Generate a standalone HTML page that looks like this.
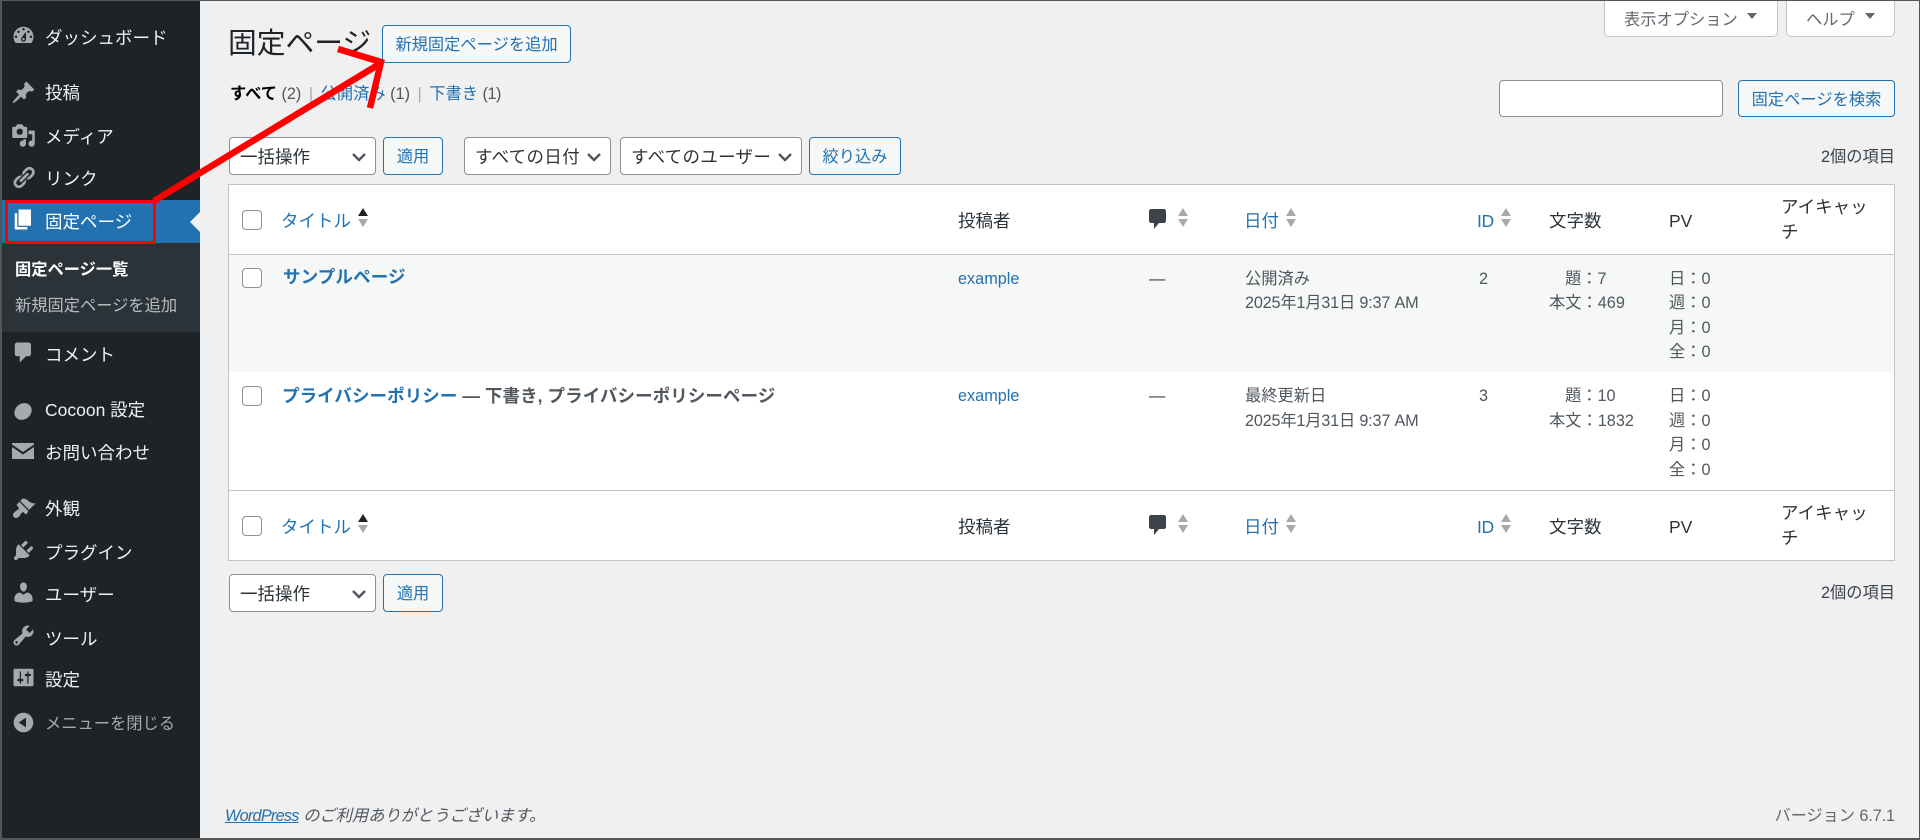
<!DOCTYPE html>
<html lang="ja"><head><meta charset="utf-8"><title>固定ページ</title>
<style>
*{box-sizing:border-box}
html,body{margin:0;padding:0;width:1920px;height:840px;overflow:hidden;background:#f0f0f1}
body{position:relative;font-family:"Liberation Sans","Noto Sans CJK JP",sans-serif;font-size:16.25px;color:#3c434a}
.a{position:absolute}
.t{position:absolute;line-height:24px;white-space:nowrap}
.m{color:#f0f0f1;font-size:17.5px;left:45px}
.ic{position:absolute;left:10.5px;width:25px;height:25px;fill:#a7aaad}
a{color:#2271b1;text-decoration:none}
.btn{position:absolute;border:1px solid #2271b1;border-radius:4px;background:#f6f7f7;color:#2271b1;text-align:center;font-size:16.25px;line-height:38px;white-space:nowrap}
.sel{position:absolute;border:1px solid #8c8f94;border-radius:4px;background:#fff;color:#2c3338;font-size:17.5px;line-height:39px;padding-left:10px;white-space:nowrap}
.sel svg{position:absolute;right:8px;top:14px;width:16px;height:12px}
.cb{position:absolute;left:242px;width:20px;height:20px;border:1px solid #8c8f94;border-radius:4px;background:#fff}
.h{color:#2c3338;font-size:17.5px}
.l{color:#2271b1;font-size:17.5px}
.tab{position:absolute;top:-2px;height:39px;background:#fff;border:1px solid #c3c4c7;border-radius:0 0 5px 5px;color:#646970;font-size:16.25px;line-height:42px;padding-left:19px}
.tab i{position:absolute;top:14px;width:0;height:0;border-left:5px solid transparent;border-right:5px solid transparent;border-top:6px solid #646970}
</style></head><body>

<!-- sidebar -->
<div class="a" style="left:0;top:0;width:200px;height:840px;background:#1d2327"></div>
<div class="a" style="left:0;top:200px;width:200px;height:43px;background:#2271b1"></div>
<div class="a" style="left:0;top:243px;width:200px;height:89px;background:#2c3338"></div>
<div class="a" style="left:190px;top:212px;width:0;height:0;border-top:10px solid transparent;border-bottom:10px solid transparent;border-right:10px solid #f0f0f1"></div>

<svg class="ic" style="top:22.5px" viewBox="0 0 20 20"><path fill-rule="evenodd" d="M3.76 16h12.48c1.1-1.37 1.76-3.11 1.76-5 0-4.42-3.58-8-8-8s-8 3.58-8 8c0 1.89.66 3.63 1.76 5zM10 4c.55 0 1 .45 1 1s-.45 1-1 1-1-.45-1-1 .45-1 1-1zM6 6c.55 0 1 .45 1 1s-.45 1-1 1-1-.45-1-1 .45-1 1-1zm8 0c.55 0 1 .45 1 1s-.45 1-1 1-1-.45-1-1 .45-1 1-1zm-5.37 5.55L12 7v6c0 1.1-.9 2-2 2s-2-.9-2-2c0-.57.24-1.08.63-1.45zM4 10c.55 0 1 .45 1 1s-.45 1-1 1-1-.45-1-1 .45-1 1-1zm12 0c.55 0 1 .45 1 1s-.45 1-1 1-1-.45-1-1 .45-1 1-1zm-5 3c0-.55-.45-1-1-1s-1 .45-1 1 .45 1 1 1 1-.45 1-1z"/></svg>
<div class="t m" style="top:26px">ダッシュボード</div>

<svg class="ic" style="top:79.5px" viewBox="0 0 20 20"><path d="M10.44 3.02l1.82-1.82 6.36 6.35-1.83 1.82c-1.05-.68-2.48-.57-3.41.36l-.75.75c-.92.93-1.04 2.35-.35 3.41l-1.83 1.82-2.41-2.41-2.8 2.79c-.42.42-3.38 2.71-3.8 2.29s1.86-3.39 2.28-3.81l2.79-2.79L4.1 9.36l1.83-1.82c1.05.69 2.48.57 3.4-.36l.75-.75c.93-.92 1.05-2.35.36-3.41z"/></svg>
<div class="t m" style="top:81px">投稿</div>

<svg class="ic" style="top:122.5px" viewBox="0 0 20 20"><path fill-rule="evenodd" d="M13 11V4c0-.55-.45-1-1-1h-1.67L9 1H5L3.67 3H2c-.55 0-1 .45-1 1v7c0 .55.45 1 1 1h10c.55 0 1-.45 1-1zM7 4.5c1.38 0 2.5 1.12 2.5 2.5S8.38 9.5 7 9.5 4.5 8.38 4.5 7 5.62 4.5 7 4.5zM14 6h5v10.5c0 1.38-1.12 2.5-2.5 2.5S14 17.88 14 16.5s1.12-2.5 2.5-2.5c.17 0 .34.02.5.05V9h-3V6zm-4 8.05V13h2v3.5c0 1.38-1.12 2.5-2.5 2.5S7 17.88 7 16.5 8.12 14 9.5 14c.17 0 .34.02.5.05z"/></svg>
<div class="t m" style="top:125px">メディア</div>

<svg class="ic" style="top:165px" viewBox="0 0 20 20"><path d="M17.74 2.76c1.68 1.69 1.68 4.41 0 6.1l-1.53 1.52c-1.12 1.12-2.7 1.47-4.14 1.09l2.62-2.61.76-.77.76-.76c.84-.84.84-2.2 0-3.04-.84-.85-2.2-.85-3.04 0l-.77.76-3.38 3.38c-.37-1.44-.02-3.02 1.1-4.14l1.52-1.53c1.69-1.68 4.42-1.68 6.1 0zM8.59 13.43l5.34-5.34c.42-.42.42-1.1 0-1.52-.44-.43-1.13-.39-1.53 0l-5.33 5.34c-.42.42-.42 1.1 0 1.52.44.43 1.13.39 1.52 0zm-.76 2.29l4.14-4.15c.38 1.44.03 3.02-1.09 4.14l-1.52 1.53c-1.69 1.68-4.41 1.68-6.1 0-1.68-1.68-1.68-4.42 0-6.1l1.53-1.52c1.12-1.12 2.7-1.47 4.14-1.1l-4.14 4.15c-.85.84-.85 2.2 0 3.05.84.84 2.2.84 3.04 0z"/></svg>
<div class="t m" style="top:167px">リンク</div>

<svg class="ic" style="top:207px;fill:#fff" viewBox="0 0 20 20"><path d="M6 15V2h10v13H6zm-1 1h8v2H3V5h2v11z"/></svg>
<div class="t m" style="top:210px;color:#fff">固定ページ</div>

<div class="t" style="left:15px;top:258px;font-size:16.25px;font-weight:700;color:#fff">固定ページ一覧</div>
<div class="t" style="left:15px;top:294px;font-size:16.25px;color:rgba(240,246,252,.7)">新規固定ページを追加</div>

<svg class="ic" style="top:340px" viewBox="0 0 20 20"><path d="M5 2h9c1.1 0 2 .9 2 2v7c0 1.1-.9 2-2 2h-2l-5 5v-5H5c-1.1 0-2-.9-2-2V4c0-1.1.9-2 2-2z"/></svg>
<div class="t m" style="top:343px">コメント</div>

<svg class="a" style="left:13px;top:401px;width:20px;height:20px" viewBox="0 0 20 20"><ellipse cx="10" cy="10.5" rx="9.2" ry="7.8" transform="rotate(-40 10 10.5)" fill="#a7aaad"/></svg>
<div class="t m" style="top:398px">Cocoon 設定</div>

<svg class="a" style="left:12px;top:443px;width:22px;height:16px" viewBox="0 0 22 16"><path fill="#a7aaad" d="M0 0h22v1.5L11 9 0 1.5zM0 4l11 7.5L22 4v12H0z"/></svg>
<div class="t m" style="top:441px">お問い合わせ</div>

<svg class="ic" style="top:496px" viewBox="0 0 20 20"><path d="M14.48 11.06L7.41 3.99l1.5-1.5c.5-.56 2.3-.47 3.51.32 1.21.8 1.43 1.28 2.91 2.1 1.18.64 2.45 1.26 4.45.85zM13.77 11.77L6.7 4.7 4.93 6.47c-.39.39-.39 1.02 0 1.41l1.06 1.06c.39.39.39 1.03 0 1.42-.6.6-1.43 1.11-2.21 1.69-.35.26-.7.53-1.01.84-1.43 1.43-1.4 2.97-.4 3.97s2.54 1.03 3.97-.4c.31-.31.58-.66.84-1.01.58-.78 1.09-1.61 1.69-2.21.39-.39 1.03-.39 1.42 0l1.06 1.06c.39.39 1.02.39 1.41 0z"/></svg>
<div class="t m" style="top:497px">外観</div>

<svg class="ic" style="top:538px" viewBox="0 0 20 20"><path d="M13.11 4.36L9.87 7.6 8 5.73l3.24-3.24c.35-.34 1.05-.2 1.56.32.52.51.66 1.21.31 1.55zm-8 1.77l.91-1.12 9.01 9.01-1.19.84c-.71.71-2.63 1.16-3.82 1.16H6.14L4.9 17.26c-.59.59-1.54.59-2.12 0-.59-.58-.59-1.53 0-2.12l1.24-1.24v-3.88c0-1.13.4-3.19 1.09-3.89zm7.26 3.97l3.24-3.24c.34-.35 1.04-.21 1.55.31.52.51.66 1.21.31 1.55l-3.24 3.25z"/></svg>
<div class="t m" style="top:541px">プラグイン</div>

<svg class="ic" style="top:580px" viewBox="0 0 20 20"><path d="M10 9.25c-2.27 0-2.73-3.44-2.73-3.44C7 4.02 7.82 2 9.97 2c2.16 0 2.98 2.02 2.71 3.81 0 0-.41 3.44-2.68 3.44zm0 2.57L12.72 10c2.39 0 4.52 2.33 4.52 4.53v2.49s-3.65 1.13-7.24 1.13c-3.65 0-7.24-1.13-7.24-1.13v-2.49c0-2.25 1.94-4.48 4.47-4.48z"/></svg>
<div class="t m" style="top:583px">ユーザー</div>

<svg class="ic" style="top:623px" viewBox="0 0 20 20"><path d="M16.68 9.77c-1.34 1.34-3.3 1.67-4.95.99l-5.41 6.52c-.99.99-2.59.99-3.58 0s-.99-2.59 0-3.57l6.52-5.42c-.68-1.65-.35-3.61.99-4.95 1.28-1.28 3.12-1.62 4.72-1.06l-2.89 2.89 2.82 2.82 2.86-2.87c.53 1.58.18 3.39-1.08 4.65zM3.81 16.21c.4.39 1.04.39 1.43 0 .4-.4.4-1.04 0-1.43-.39-.4-1.03-.4-1.43 0-.39.39-.39 1.03 0 1.43z"/></svg>
<div class="t m" style="top:627px">ツール</div>

<svg class="ic" style="top:665px" viewBox="0 0 20 20"><path fill-rule="evenodd" d="M18 16V4c0-.55-.45-1-1-1H3c-.55 0-1 .45-1 1v12c0 .55.45 1 1 1h14c.55 0 1-.45 1-1zM8 11h1c.55 0 1 .45 1 1s-.45 1-1 1H8v1.5c0 .28-.22.5-.5.5s-.5-.22-.5-.5V13H6c-.55 0-1-.45-1-1s.45-1 1-1h1V5.5c0-.28.22-.5.5-.5s.5.22.5.5V11zm5-2h-1c-.55 0-1-.45-1-1s.45-1 1-1h1V5.5c0-.28.22-.5.5-.5s.5.22.5.5V7h1c.55 0 1 .45 1 1s-.45 1-1 1h-1v5.5c0 .28-.22.5-.5.5s-.5-.22-.5-.5V9z"/></svg>
<div class="t m" style="top:668px">設定</div>

<svg class="ic" style="top:710px" viewBox="0 0 20 20"><path fill-rule="evenodd" d="M10 2.16c4.33 0 7.84 3.51 7.84 7.84s-3.51 7.84-7.84 7.84S2.16 14.33 2.16 10 5.71 2.16 10 2.16zm2 11.72V6.12L6.18 9.97z"/></svg>
<div class="t m" style="top:712px;font-size:16.25px;color:#a7aaad">メニューを閉じる</div>

<!-- header -->
<div class="t" style="left:228px;top:26px;font-size:28.75px;line-height:36px;color:#1d2327">固定ページ</div>
<div class="btn" style="left:382px;top:25px;width:189px;height:38px">新規固定ページを追加</div>

<div class="t" style="left:230px;top:82px;font-size:16.25px"><b style="color:#000">すべて</b> <span style="color:#50575e">(2)</span> <span style="color:#a7aaad;margin:0 3px">|</span> <a>公開済み</a> <span style="color:#50575e">(1)</span> <span style="color:#a7aaad;margin:0 3px">|</span> <a>下書き</a> <span style="color:#50575e;letter-spacing:-.5px">(1)</span></div>

<div class="tab" style="left:1604px;width:174px">表示オプション<i style="left:142px"></i></div>
<div class="tab" style="left:1786px;width:109px">ヘルプ<i style="left:78px"></i></div>

<div class="a" style="left:1499px;top:80px;width:224px;height:37px;background:#fff;border:1px solid #8c8f94;border-radius:4px"></div>
<div class="btn" style="left:1738px;top:80px;width:157px;height:37px">固定ページを検索</div>

<!-- top nav -->
<div class="sel" style="left:229px;top:137px;width:147px;height:38px">一括操作<svg viewBox="0 0 16 12"><path d="M2 2l6 6 6-6" fill="none" stroke="#50575e" stroke-width="2.4"/></svg></div>
<div class="btn" style="left:383px;top:137px;width:60px;height:38px">適用</div>
<div class="sel" style="left:464px;top:137px;width:147px;height:38px;letter-spacing:.3px">すべての日付<svg viewBox="0 0 16 12"><path d="M2 2l6 6 6-6" fill="none" stroke="#50575e" stroke-width="2.4"/></svg></div>
<div class="sel" style="left:620px;top:137px;width:182px;height:38px;letter-spacing:.3px">すべてのユーザー<svg viewBox="0 0 16 12"><path d="M2 2l6 6 6-6" fill="none" stroke="#50575e" stroke-width="2.4"/></svg></div>
<div class="btn" style="left:809px;top:137px;width:92px;height:38px">絞り込み</div>
<div class="t" style="right:25px;top:145px">2個の項目</div>

<!-- table -->
<div class="a" style="left:228px;top:184px;width:1667px;height:377px;background:#fff;border:1px solid #c3c4c7"></div>
<div class="a" style="left:229px;top:254px;width:1665px;height:1px;background:#c3c4c7"></div>
<div class="a" style="left:229px;top:255px;width:1665px;height:117px;background:#f6f7f7"></div>
<div class="a" style="left:229px;top:490px;width:1665px;height:1px;background:#c3c4c7"></div>

<!-- sort arrows -->
<svg class="a" style="left:0;top:0;width:1920px;height:840px" viewBox="0 0 1920 840">
<g fill="#a7aaad">
<path d="M358 219h10l-5 8z"/><path d="M358 525h10l-5 8z"/>
<path d="M1178 216h10l-5-8zM1178 219h10l-5 8zM1178 522h10l-5-8zM1178 525h10l-5 8z"/>
<path d="M1286 216h10l-5-8zM1286 219h10l-5 8zM1286 522h10l-5-8zM1286 525h10l-5 8z"/>
<path d="M1501 216h10l-5-8zM1501 219h10l-5 8zM1501 522h10l-5-8zM1501 525h10l-5 8z"/>
</g>
<path fill="#1d2327" d="M358 216h10l-5-8zM358 522h10l-5-8z"/>
<g fill="#3c434a">
<path d="M1151 209h13c1 0 2 1 2 2v10c0 1-1 2-2 2h-5l-5 6v-6h-3c-1 0-2-1-2-2v-10c0-1 1-2 2-2z"/>
<path d="M1151 515h13c1 0 2 1 2 2v10c0 1-1 2-2 2h-5l-5 6v-6h-3c-1 0-2-1-2-2v-10c0-1 1-2 2-2z"/>
</g>
</svg>

<!-- head -->
<div class="cb" style="top:210px"></div>
<div class="t l" style="left:281px;top:209px">タイトル</div>
<div class="t h" style="left:958px;top:209px">投稿者</div>
<div class="t l" style="left:1244px;top:209px">日付</div>
<div class="t l" style="left:1477px;top:209px;letter-spacing:-.4px">ID</div>
<div class="t h" style="left:1549px;top:209px">文字数</div>
<div class="t h" style="left:1669px;top:209px">PV</div>
<div class="t h" style="left:1781px;top:195px">アイキャッ</div>
<div class="t h" style="left:1781px;top:220px">チ</div>

<!-- row 1 -->
<div class="cb" style="top:268px"></div>
<div class="t" style="left:283px;top:265px;font-size:17.5px;font-weight:700;color:#2271b1;letter-spacing:.15px">サンプルページ</div>
<a class="t" style="left:958px;top:267px">example</a>
<div class="t" style="left:1149px;top:267px">—</div>
<div class="t" style="left:1245px;top:267px;color:#50575e">公開済み</div>
<div class="t" style="left:1245px;top:291px;color:#50575e;letter-spacing:-.2px">2025年1月31日 9:37 AM</div>
<div class="t" style="left:1479px;top:267px;color:#50575e">2</div>
<div class="t" style="left:1565px;top:267px;color:#50575e">題：7</div>
<div class="t" style="left:1549px;top:291px;color:#50575e">本文：469</div>
<div class="t" style="left:1669px;top:267px;color:#50575e">日：0</div>
<div class="t" style="left:1669px;top:291px;color:#50575e">週：0</div>
<div class="t" style="left:1669px;top:316px;color:#50575e">月：0</div>
<div class="t" style="left:1669px;top:340px;color:#50575e">全：0</div>

<!-- row 2 -->
<div class="cb" style="top:386px"></div>
<div class="t" style="left:282px;top:384px;font-size:17.5px;font-weight:700;color:#50575e;letter-spacing:.08px"><span style="color:#2271b1">プライバシーポリシー</span> — 下書き, プライバシーポリシーページ</div>
<a class="t" style="left:958px;top:384px">example</a>
<div class="t" style="left:1149px;top:384px">—</div>
<div class="t" style="left:1245px;top:384px;color:#50575e">最終更新日</div>
<div class="t" style="left:1245px;top:409px;color:#50575e;letter-spacing:-.2px">2025年1月31日 9:37 AM</div>
<div class="t" style="left:1479px;top:384px;color:#50575e">3</div>
<div class="t" style="left:1565px;top:384px;color:#50575e">題：10</div>
<div class="t" style="left:1549px;top:409px;color:#50575e">本文：1832</div>
<div class="t" style="left:1669px;top:384px;color:#50575e">日：0</div>
<div class="t" style="left:1669px;top:409px;color:#50575e">週：0</div>
<div class="t" style="left:1669px;top:433px;color:#50575e">月：0</div>
<div class="t" style="left:1669px;top:458px;color:#50575e">全：0</div>

<!-- foot -->
<div class="cb" style="top:516px"></div>
<div class="t l" style="left:281px;top:515px">タイトル</div>
<div class="t h" style="left:958px;top:515px">投稿者</div>
<div class="t l" style="left:1244px;top:515px">日付</div>
<div class="t l" style="left:1477px;top:515px;letter-spacing:-.4px">ID</div>
<div class="t h" style="left:1549px;top:515px">文字数</div>
<div class="t h" style="left:1669px;top:515px">PV</div>
<div class="t h" style="left:1781px;top:501px">アイキャッ</div>
<div class="t h" style="left:1781px;top:526px">チ</div>

<!-- bottom nav -->
<div class="sel" style="left:229px;top:574px;width:147px;height:38px">一括操作<svg viewBox="0 0 16 12"><path d="M2 2l6 6 6-6" fill="none" stroke="#50575e" stroke-width="2.4"/></svg></div>
<div class="btn" style="left:383px;top:574px;width:60px;height:38px">適用</div>
<div class="t" style="right:25px;top:581px">2個の項目</div>

<!-- footer -->
<div class="t" style="left:225px;top:804px;font-size:16.25px;font-style:italic;color:#50575e"><a style="text-decoration:underline;letter-spacing:-.75px">WordPress</a> のご利用ありがとうございます。</div>
<div class="t" style="right:25px;top:804px;color:#646970;letter-spacing:-.1px">バージョン 6.7.1</div>

<!-- annotations -->
<div class="a" style="left:5px;top:200px;width:151px;height:44px;border:3px solid #f00"></div>
<svg class="a" style="left:0;top:0;width:1920px;height:840px" viewBox="0 0 1920 840">
<path d="M154 201L381 63" stroke="#f00" stroke-width="6.5" fill="none"/>
<path d="M338 49L381 62L370 108" stroke="#f00" stroke-width="6.5" fill="none"/>
</svg>

<!-- window border -->
<div class="a" style="left:0;top:0;width:1920px;height:840px;border-style:solid;border-color:#555;border-width:1px 1px 2px 2px"></div>
</body></html>
